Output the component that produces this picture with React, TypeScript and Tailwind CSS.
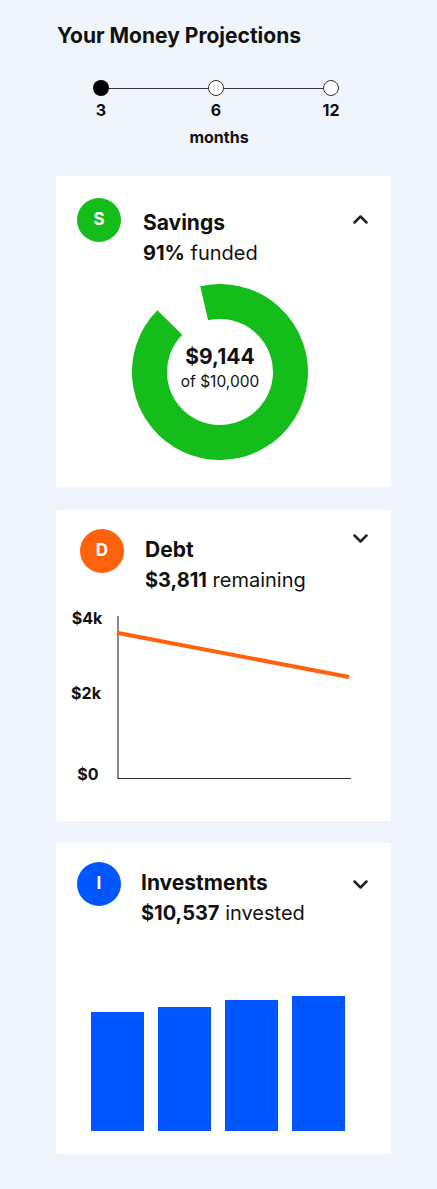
import React from "react";

const font = { fontFamily: "Inter, 'Noto Sans', sans-serif" };

function Chevron({ up }: { up?: boolean }) {
  return (
    <svg width="15" height="9" viewBox="0 0 15 9" className="block">
      <polyline
        points={up ? "1.5,7.5 7.5,1.5 13.5,7.5" : "1.5,1.5 7.5,7.5 13.5,1.5"}
        fill="none"
        stroke="#222"
        strokeWidth="2.5"
        strokeLinecap="round"
        strokeLinejoin="round"
      />
    </svg>
  );
}

function Avatar({ letter, color }: { letter: string; color: string }) {
  return (
    <div
      className="w-[44px] h-[44px] rounded-full flex items-center justify-center text-white font-bold text-[17px] shrink-0"
      style={{ backgroundColor: color }}
    >
      {letter}
    </div>
  );
}

export default function App() {
  return (
    <div className="min-h-[1189px] w-[437px] bg-[#f0f4fb] text-[#111]" style={font}>
      <div className="pt-[22px] pl-[57px] text-[21px] leading-[28px] font-bold">
        Your Money Projections
      </div>

      {/* slider */}
      <div className="ml-[93px] w-[246px] mt-[30px] flex items-center">
        <div className="w-4 h-4 rounded-full bg-black shrink-0" />
        <div className="flex-1 h-px bg-[#333]" />
        <div className="w-4 h-4 rounded-full bg-white border border-[#333] shrink-0" />
        <div className="flex-1 h-px bg-[#333]" />
        <div className="w-4 h-4 rounded-full bg-white border border-[#333] shrink-0" />
      </div>
      <div className="ml-[93px] w-[246px] mt-[4px] flex justify-between text-[16px] font-bold leading-[20px]">
        <div className="w-4 flex justify-center whitespace-nowrap">3</div>
        <div className="w-4 flex justify-center whitespace-nowrap">6</div>
        <div className="w-4 flex justify-center whitespace-nowrap">12</div>
      </div>
      <div className="ml-[96px] w-[246px] mt-[7px] text-center text-[16px] font-bold leading-[20px]">
        months
      </div>

      {/* Savings card */}
      <div className="ml-[56px] w-[335px] h-[311px] bg-white mt-[29px] pt-[22px] pl-[21px] pr-[23px]">
        <div className="flex items-start">
          <Avatar letter="S" color="#15bd1a" />
          <div className="ml-[22px] mt-[10px] flex-1">
            <div className="text-[21px] font-bold leading-[30px]">Savings</div>
            <div className="text-[20px] leading-[30px]">
              <span className="font-bold">91%</span> funded
            </div>
          </div>
          <div className="mt-[17px]">
            <Chevron up />
          </div>
        </div>
        <div className="mt-[16px] ml-[55px] w-[176px] h-[176px] relative">
          <svg width="176" height="176" viewBox="0 0 176 176" className="block">
            <path
              d="M 72.14 19.31 A 70.5 70.5 0 1 1 37.8 38.49"
              fill="none"
              stroke="#15bd1a"
              strokeWidth="35"
            />
          </svg>
          <div className="absolute inset-0 flex flex-col items-center justify-center">
            <div className="text-[21px] font-bold leading-[24px] mt-[-7px]">$9,144</div>
            <div className="text-[15.5px] leading-[20px] mt-[3px]">of $10,000</div>
          </div>
        </div>
      </div>

      {/* Debt card */}
      <div className="ml-[56px] w-[335px] h-[311px] bg-white mt-[23px] pt-[19px] pl-[24px] pr-[23px]">
        <div className="flex items-start">
          <Avatar letter="D" color="#ff620a" />
          <div className="ml-[21px] mt-[6px] flex-1">
            <div className="text-[21px] font-bold leading-[30px]">Debt</div>
            <div className="text-[20px] leading-[30px]">
              <span className="font-bold">$3,811</span> remaining
            </div>
          </div>
          <div className="mt-[5px]">
            <Chevron />
          </div>
        </div>
        <svg width="335" height="190" viewBox="0 0 335 190" className="block ml-[-24px] mt-[5px]">
          <text x="31" y="23.5" textAnchor="middle" fontSize="16" fontWeight="700" fill="#111" style={font}>$4k</text>
          <text x="30" y="98.5" textAnchor="middle" fontSize="16" fontWeight="700" fill="#111" style={font}>$2k</text>
          <text x="32" y="179.5" textAnchor="middle" fontSize="16" fontWeight="700" fill="#111" style={font}>$0</text>
          <line x1="62" y1="16" x2="62" y2="179" stroke="#111" strokeWidth="1" />
          <line x1="62" y1="178.5" x2="295" y2="178.5" stroke="#333" strokeWidth="1" />
          <line x1="62" y1="33" x2="293" y2="77" stroke="#ff620a" strokeWidth="4" />
        </svg>
      </div>

      {/* Investments card */}
      <div className="ml-[56px] w-[335px] h-[311px] bg-white mt-[22px] pt-[19px] pl-[21px] pr-[23px]">
        <div className="flex items-start">
          <Avatar letter="I" color="#0057ff" />
          <div className="ml-[20px] mt-[6px] flex-1">
            <div className="text-[21px] font-bold leading-[30px]">Investments</div>
            <div className="text-[20px] leading-[30px]">
              <span className="font-bold">$10,537</span> invested
            </div>
          </div>
          <div className="mt-[18px]">
            <Chevron />
          </div>
        </div>
        <div className="mt-[68px] ml-[14px] h-[135px] flex items-end gap-[14px]">
          <div className="w-[53px] h-[119px] bg-[#0057ff]" />
          <div className="w-[53px] h-[124px] bg-[#0057ff]" />
          <div className="w-[53px] h-[131px] bg-[#0057ff]" />
          <div className="w-[53px] h-[135px] bg-[#0057ff]" />
        </div>
      </div>
    </div>
  );
}
